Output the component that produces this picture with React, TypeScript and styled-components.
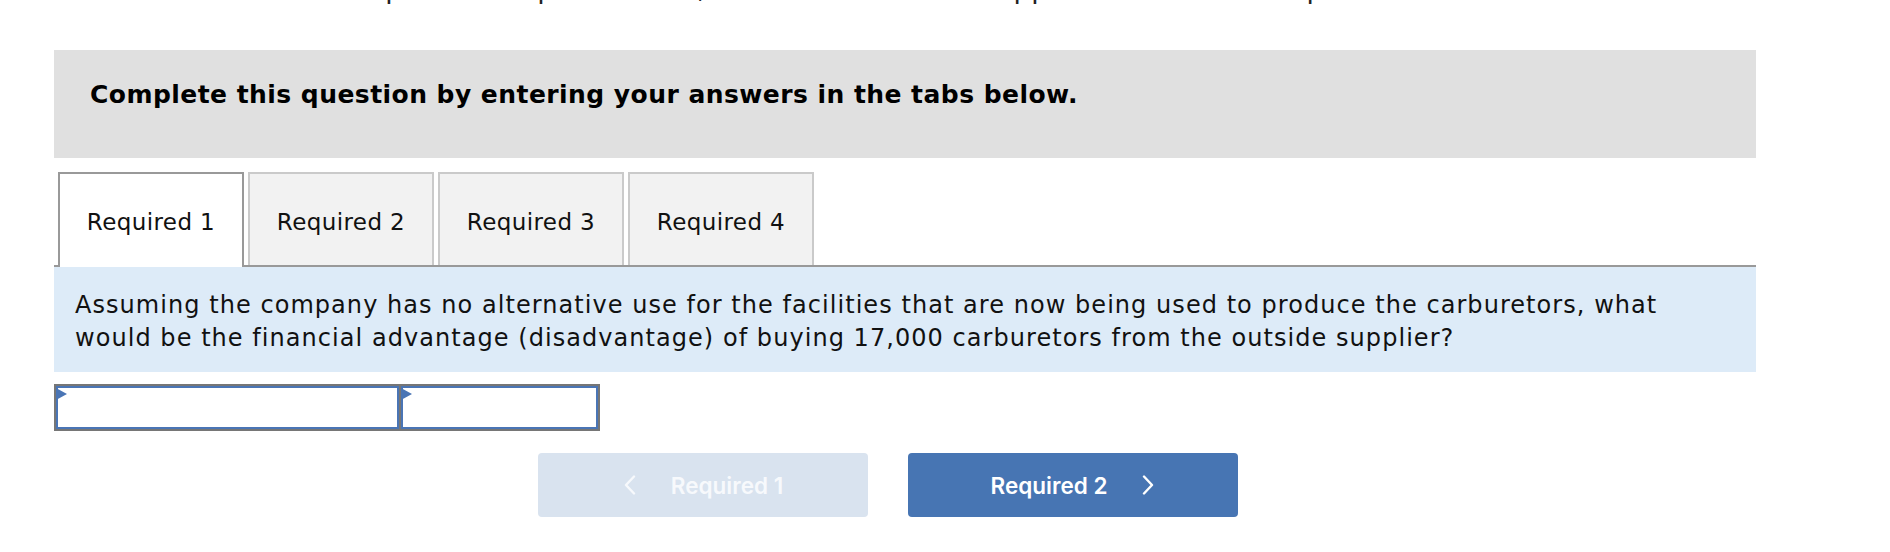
import React from "react";
import styled, { createGlobalStyle } from "styled-components";

const GlobalStyle = createGlobalStyle`
  body {
    margin: 0;
    background: #ffffff;
    font-family: "DejaVu Sans", Verdana, sans-serif;
    color: #111111;
  }
`;

const tabs = ["Required 1", "Required 2", "Required 3", "Required 4"];

const App = () => {
  return (
    <>
      <GlobalStyle />
      <Page>
        <TopClip>
          <ClippedText>
            4. Given the new assumption in requirement 3, should the outside
            supplier's offer be accepted?
          </ClippedText>
        </TopClip>

        <Instructions>
          Complete this question by entering your answers in the tabs below.
        </Instructions>

        <TabBar>
          {tabs.map((t, i) => (
            <Tab key={t} $active={i === 0}>
              {t}
            </Tab>
          ))}
        </TabBar>

        <Question>
          Assuming the company has no alternative use for the facilities that
          are now being used to produce the carburetors, what would be the
          financial advantage (disadvantage) of buying 17,000 carburetors from
          the outside supplier?
        </Question>

        <AnswerTable>
          <AnswerCell $width={343}>
            <Flag />
          </AnswerCell>
          <AnswerCell $width={197}>
            <Flag />
          </AnswerCell>
        </AnswerTable>

        <NavRow>
          <NavButton $disabled>
            <Chevron viewBox="0 0 14 20">
              <polyline points="11,1.5 3,10 11,18.5" />
            </Chevron>
            Required 1
          </NavButton>
          <NavButton>
            Required 2
            <Chevron viewBox="0 0 14 20">
              <polyline points="3,1.5 11,10 3,18.5" />
            </Chevron>
          </NavButton>
        </NavRow>
      </Page>
    </>
  );
};

const Page = styled.div`
  width: 1702px;
  margin-left: 54px;
  padding-bottom: 36px;
`;

const TopClip = styled.div`
  height: 5px;
  overflow: hidden;
  margin-left: -4px;
`;

const ClippedText = styled.div`
  margin-top: -27px;
  font-size: 27px;
  line-height: 31px;
  letter-spacing: 0.4px;
  white-space: nowrap;
  color: #222;
`;

const Instructions = styled.div`
  margin-top: 45px;
  height: 108px;
  box-sizing: border-box;
  padding: 30px 36px 0;
  background: #e0e0e0;
  font-size: 25px;
  font-weight: bold;
  letter-spacing: 0.45px;
  color: #000;
`;

const TabBar = styled.div`
  margin-top: 14px;
  display: flex;
  gap: 4px;
  padding-left: 4px;
  border-bottom: 2px solid #999999;
`;

const Tab = styled.div<{ $active?: boolean }>`
  width: 186px;
  height: ${(p) => (p.$active ? "95px" : "93px")};
  margin-bottom: ${(p) => (p.$active ? "-2px" : "0")};
  box-sizing: border-box;
  padding-top: 35px;
  text-align: center;
  font-size: 23px;
  letter-spacing: 0.4px;
  color: #111;
  background: ${(p) => (p.$active ? "#ffffff" : "#f2f2f2")};
  border: 2px solid ${(p) => (p.$active ? "#999999" : "#cacaca")};
  border-bottom: none;
`;

const Question = styled.div`
  background: #ddebf8;
  padding: 22px 60px 17px 21px;
  font-size: 24px;
  line-height: 33px;
  letter-spacing: 1.05px;
  color: #111;
`;

const AnswerTable = styled.div`
  margin-top: 12px;
  display: inline-flex;
  gap: 2px;
  background: #767676;
  border: 2px solid #767676;
`;

const AnswerCell = styled.div<{ $width: number }>`
  position: relative;
  width: ${(p) => p.$width}px;
  height: 43px;
  box-sizing: border-box;
  background: #ffffff;
  border: 2px solid #4a75b5;
`;

const Flag = styled.span`
  position: absolute;
  top: 0;
  left: -2px;
  width: 0;
  height: 0;
  border-left: 11px solid #4a75b5;
  border-top: 6.5px solid transparent;
  border-bottom: 6.5px solid transparent;
`;

const NavRow = styled.div`
  margin-top: 20px;
  padding-left: 484px;
  display: flex;
  gap: 40px;
`;

const NavButton = styled.button<{ $disabled?: boolean }>`
  width: 330px;
  height: 64px;
  border: none;
  border-radius: 4px;
  display: flex;
  align-items: center;
  justify-content: center;
  gap: 34px;
  font-family: Inter, Roboto, sans-serif;
  font-size: 22.5px;
  font-weight: 600;
  color: ${(p) => (p.$disabled ? "#f7f9fc" : "#ffffff")};
  background: ${(p) => (p.$disabled ? "#d9e3ef" : "#4775b3")};
  cursor: ${(p) => (p.$disabled ? "default" : "pointer")};
`;

const Chevron = styled.svg`
  width: 14px;
  height: 20px;
  fill: none;
  stroke: currentColor;
  stroke-width: 2.4;
  stroke-linecap: round;
  stroke-linejoin: round;
`;

export default App;
